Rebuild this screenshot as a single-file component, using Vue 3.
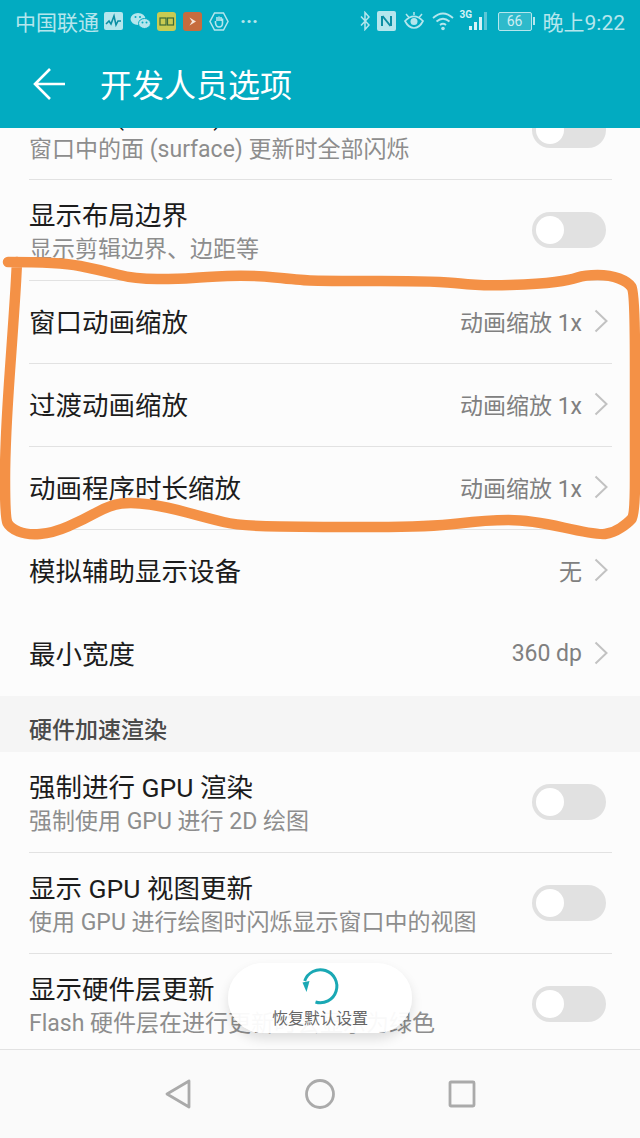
<script setup>
const firstRows = [
  { title: '显示面 (surface) 更新', sub: '窗口中的面 (surface) 更新时全部闪烁' },
  { title: '显示布局边界', sub: '显示剪辑边界、边距等', tall: true },
]
const valueRows = [
  { title: '窗口动画缩放', value: '动画缩放 1x' },
  { title: '过渡动画缩放', value: '动画缩放 1x' },
  { title: '动画程序时长缩放', value: '动画缩放 1x' },
  { title: '模拟辅助显示设备', value: '无', flush: true },
  { title: '最小宽度', value: '360 dp', flush: true },
]
const gpuRows = [
  { title: '强制进行 GPU 渲染', sub: '强制使用 GPU 进行 2D 绘图' },
  { title: '显示 GPU 视图更新', sub: '使用 GPU 进行绘图时闪烁显示窗口中的视图' },
  { title: '显示硬件层更新', sub: 'Flash 硬件层在进行更新时会显示为绿色', flush: true },
]
const pts = [
  [8, 262], [60, 262], [100, 270], [135, 279], [180, 279], [205, 277], [250, 275], [300, 280], [320, 281],
  [440, 281], [480, 286], [540, 284], [570, 280], [585, 275], [610, 275], [628, 282], [635, 292],
  [635, 440], [635, 515], [628, 523], [613, 533], [597, 535], [530, 520], [487, 520], [430, 527],
  [320, 527], [240, 526], [207, 518], [167, 507], [133, 502], [110, 505], [83, 520], [53, 533],
  [27, 535], [10, 528], [5, 518], [5, 440], [15, 300], [17, 262],
]
const stroke = pts.reduce((d, p, i) => {
  if (i === 0) return `M${p[0]} ${p[1]}`
  if (i === pts.length - 1) return `${d} L${p[0]} ${p[1]}`
  const n = pts[i + 1]
  return `${d} Q${p[0]} ${p[1]} ${(p[0] + n[0]) / 2} ${(p[1] + n[1]) / 2}`
}, '')
</script>

<template>
  <div class="page">
    <header class="head">
      <div class="status">
        <div class="status-left">
          <span class="carrier">中国联通</span>
          <svg class="ic" width="19" height="18" viewBox="0 0 19 18"><rect width="19" height="18" rx="2" fill="#b5e6ed"/><path d="M2 12 L5 9 L7 12 L10 4 L12 13 L14 9 L17 9" fill="none" stroke="#0a8ea3" stroke-width="1.6"/></svg>
          <svg class="ic" width="21" height="18" viewBox="0 0 21 18"><ellipse cx="8" cy="7" rx="7.5" ry="6" fill="#b5e6ed"/><ellipse cx="14.5" cy="11.5" rx="6" ry="5" fill="#b5e6ed" stroke="#02abc1"/><circle cx="12.5" cy="10.5" r="1" fill="#02abc1"/><circle cx="16.5" cy="10.5" r="1" fill="#02abc1"/><circle cx="5.5" cy="5" r="1" fill="#02abc1"/><circle cx="10" cy="5" r="1" fill="#02abc1"/></svg>
          <svg class="ic" width="19" height="19" viewBox="0 0 19 19"><rect width="19" height="19" rx="3" fill="#c9cb52"/><rect x="3" y="6" width="6" height="7" fill="none" stroke="#3d6b3a" stroke-width="1.2"/><rect x="10.5" y="6" width="6" height="7" fill="none" stroke="#3d6b3a" stroke-width="1.2"/></svg>
          <svg class="ic" width="19" height="19" viewBox="0 0 19 19"><rect width="19" height="19" rx="3" fill="#c66c3e"/><path d="M6.5 5.5 L13 9.5 L6.5 13.5 L9 9.5Z" fill="#f5e6da"/></svg>
          <svg class="ic" width="20" height="19" viewBox="0 0 20 19"><path d="M5.5 1 H14.5 L19 9.5 L14.5 18 H5.5 L1 9.5Z" fill="none" stroke="#b5e6ed" stroke-width="1.5"/><path d="M6.5 9 V11 Q7 15 10 15 Q13.5 15 13.5 11 V6.5 M8 9 V5 M10 9 V4.5 M12 9 V5" fill="none" stroke="#b5e6ed" stroke-width="1.6"/></svg>
          <span class="dots">···</span>
        </div>
        <div class="status-right">
          <svg width="10" height="20" viewBox="0 0 10 20"><path d="M1 5.5 L9 14 L5 18.5 V1.5 L9 6 L1 14.5" fill="none" stroke="#b5e6ed" stroke-width="1.5"/></svg>
          <svg width="19" height="20" viewBox="0 0 19 20"><rect width="19" height="20" rx="2" fill="#b5e6ed"/><path d="M5 5 V15 M14 5 V15 M5.5 5 L13.5 15" fill="none" stroke="#0a8ea3" stroke-width="2"/></svg>
          <svg width="22" height="20" viewBox="0 0 22 20"><path d="M2 10 Q11 1 20 10 Q16.5 17 11 17 Q5.5 17 2 10Z" fill="none" stroke="#b5e6ed" stroke-width="1.7"/><circle cx="11" cy="10.5" r="3.5" fill="#b5e6ed"/><path d="M3 3 L6 6.5 M11 1 V4 M19 3 L16 6.5" stroke="#b5e6ed" stroke-width="1.5"/></svg>
          <svg width="22" height="20" viewBox="0 0 22 20"><path d="M1 7 Q11 -2 21 7 M4.5 10.5 Q11 5 17.5 10.5 M8 14 Q11 11.5 14 14" fill="none" stroke="#b5e6ed" stroke-width="1.8"/><circle cx="11" cy="17.5" r="1.8" fill="#b5e6ed"/></svg>
          <span class="signal">
            <span class="g3">3G</span>
            <svg width="20" height="20" viewBox="0 0 20 20"><rect x="1" y="15" width="3" height="4" fill="#d6f2f6"/><rect x="6" y="11" width="3" height="8" fill="#d6f2f6"/><rect x="11" y="6" width="3" height="13" fill="#d6f2f6"/><rect x="16" y="1" width="3" height="18" fill="#5cc7d6"/></svg>
          </span>
          <span class="battery"><span class="cell">66</span><i class="nub"></i></span>
          <span class="clock">晚上9:22</span>
        </div>
      </div>
      <div class="toolbar">
        <svg class="back" width="34" height="34" viewBox="0 0 34 34"><path d="M18 2 L3 17 L18 32 M3 17 H33" fill="none" stroke="#fff" stroke-width="2.6"/></svg>
        <h1>开发人员选项</h1>
      </div>
    </header>

    <main class="list">
      <div class="first-group">
        <div v-for="r in firstRows" :key="r.title" class="row two" :class="{ tall: r.tall }">
          <div class="txt">
            <div class="title">{{ r.title }}</div>
            <div class="sub">{{ r.sub }}</div>
          </div>
          <span class="toggle"><i></i></span>
        </div>
        <div v-for="r in valueRows" :key="r.title" class="row one" :class="{ flush: r.flush }">
          <div class="title">{{ r.title }}</div>
          <div class="val">
            <span>{{ r.value }}</span>
            <svg width="14" height="24" viewBox="0 0 14 24"><path d="M1.5 1.5 L12.5 12 L1.5 22.5" fill="none" stroke="#c2c2c2" stroke-width="2"/></svg>
          </div>
        </div>
      </div>
      <div class="section">硬件加速渲染</div>
      <div v-for="r in gpuRows" :key="r.title" class="row two gpu" :class="{ flush: r.flush }">
        <div class="txt">
          <div class="title">{{ r.title }}</div>
          <div class="sub">{{ r.sub }}</div>
        </div>
        <span class="toggle"><i></i></span>
      </div>
    </main>

    <nav class="nav">
      <svg width="30" height="32" viewBox="0 0 30 32"><path d="M26 3 L4 16 L26 29Z" fill="none" stroke="#aaa" stroke-width="2.8" stroke-linejoin="round"/></svg>
      <svg width="30" height="30" viewBox="0 0 30 30"><circle cx="15" cy="15" r="13.5" fill="none" stroke="#aaa" stroke-width="2.8"/></svg>
      <svg width="30" height="30" viewBox="0 0 30 30"><rect x="3" y="3" width="24" height="24" rx="1" fill="none" stroke="#aaa" stroke-width="2.8"/></svg>
    </nav>

    <div class="toast">
      <svg width="40" height="40" viewBox="0 0 40 40"><path d="M15.5 36 A16.5 16.5 0 1 0 4.7 15" fill="none" stroke="#1aa8b4" stroke-width="3"/><path d="M2.5 16.5 L9.5 15 L6.5 26Z" fill="#1aa8b4"/></svg>
      <span>恢复默认设置</span>
    </div>

    <svg class="mark" width="640" height="1138" viewBox="0 0 640 1138"><path :d="stroke" fill="none" stroke="#f49146" stroke-width="10.5" stroke-linejoin="round" stroke-linecap="round"/></svg>
  </div>
</template>

<style scoped>
.page {
  position: relative;
  width: 640px;
  height: 1138px;
  overflow: hidden;
  display: flex;
  flex-direction: column;
  background: #fcfcfc;
  font-family: Roboto, "Noto Sans CJK SC", sans-serif;
}
.head { flex: none; height: 128px; background: #02abc1; color: #fff; }
.status {
  height: 42px;
  display: flex;
  justify-content: space-between;
  align-items: center;
  padding: 0 15px 0 15px;
  color: #b5e6ed;
}
.status-left, .status-right { display: flex; align-items: center; }
.carrier { font-size: 21px; margin-right: 5px; }
.ic { margin-right: 7px; }
.ic:nth-of-type(2) { margin-right: 6px; }
.dots { font-size: 20px; font-weight: 700; margin-left: 4px; }
.status-right { gap: 7px; }
.signal { display: flex; align-items: flex-start; position: relative; padding-left: 8px; margin-left: -1px; }
.g3 { position: absolute; left: 0; top: -2px; font-size: 10px; font-weight: 700; color: #d6f2f6; }
.battery { display: flex; align-items: center; margin-left: 3px; }
.cell {
  width: 32px; height: 17px;
  border: 1px solid #b5e6ed;
  border-radius: 2px;
  background: rgba(181, 230, 237, .25);
  color: #d0eef3;
  font-size: 14px; line-height: 17px; text-align: center;
}
.nub { width: 2px; height: 8px; background: #b5e6ed; margin-left: 1px; }
.clock { font-size: 21px; margin-left: 1px; }
.toolbar { height: 86px; display: flex; align-items: center; padding-left: 32px; padding-bottom: 2px; box-sizing: border-box; }
.back { flex: none; }
h1 { margin: 4px 0 0 34px; font-size: 32px; font-weight: 400; line-height: 40px; }

.list { flex: none; height: 921px; overflow: hidden; }
.first-group { margin-top: -48px; }
.row {
  margin: 0 28px 0 29px;
  display: flex;
  justify-content: space-between;
  align-items: center;
  box-sizing: border-box;
  border-bottom: 1px solid #e2e2e2;
}
.row.flush { border-bottom-color: transparent; }
.two { height: 100px; padding-right: 6px; }
.two.tall { height: 101px; }
.gpu { height: 101px; }
.one { height: 83px; }
.one > .title { padding-top: 2px; }
.txt { align-self: flex-start; padding-top: 18px; }
.title { font-size: 26.5px; line-height: 36px; color: #1c1c1c; }
.sub { font-size: 23px; line-height: 32px; color: #8d8d8d; }
.val { display: flex; align-items: center; gap: 12px; font-size: 23px; color: #808080; padding: 0 4px 2px 0; }
.toggle {
  width: 74px; height: 36px;
  border-radius: 18px;
  background: #e1e1e1;
  padding: 4px;
  box-sizing: border-box;
}
.toggle i { display: block; width: 28px; height: 28px; border-radius: 50%; background: #fff; }
.section {
  height: 56px;
  background: #f5f5f5;
  padding-left: 29px;
  font-size: 23px;
  font-weight: 500;
  line-height: 70px;
  color: #4a4a4a;
  box-sizing: border-box;
}
.nav {
  flex: none;
  height: 89px;
  border-top: 1px solid #e2e2e2;
  background: #fafafa;
  display: flex;
  justify-content: center;
  align-items: center;
  gap: 112px;
  box-sizing: border-box;
}
.toast {
  position: absolute;
  left: 228px;
  top: 963px;
  width: 184px;
  height: 70px;
  border-radius: 35px;
  background: rgba(255, 255, 255, .95);
  box-shadow: 0 6px 12px rgba(0, 0, 0, .12);
  display: flex;
  flex-direction: column;
  align-items: center;
  font-size: 16px;
  line-height: 20px;
  color: #666;
  padding-top: 3px;
  box-sizing: border-box;
}
.toast span { margin-top: 3px; }
.mark { position: absolute; left: 0; top: 0; pointer-events: none; }
</style>
